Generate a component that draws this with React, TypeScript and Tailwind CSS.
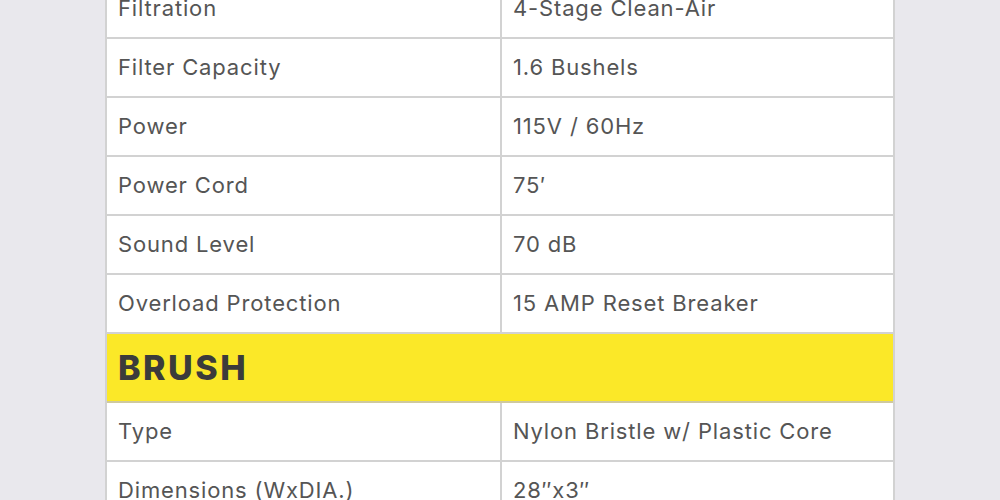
const rowsTop = [
  ['Filtration', '4-Stage Clean-Air'],
  ['Filter Capacity', '1.6 Bushels'],
  ['Power', '115V / 60Hz'],
  ['Power Cord', '75\u2032'],
  ['Sound Level', '70 dB'],
  ['Overload Protection', '15 AMP Reset Breaker'],
];

const rowsBrush = [
  ['Type', 'Nylon Bristle w/ Plastic Core'],
  ['Dimensions (WxDIA.)', '28\u2033x3\u2033'],
  ['Speed', '1,200 RPM'],
];

function SpecRow({ label, value }: { label: string; value: string }) {
  return (
    <div className="grid grid-cols-[395px_1fr] border-b-2 border-[#d2d2d2] h-[59px]">
      <div className="flex items-center pl-[11px] pr-3 border-r-2 border-[#d2d2d2]">{label}</div>
      <div className="flex items-center px-[11px]">{value}</div>
    </div>
  );
}

export default function App() {
  return (
    <div className="min-h-screen h-[500px] overflow-hidden bg-[#e9e8ed]">
      <div
        className="ml-[105px] w-[790px] -mt-[22px] bg-white border-x-2 border-t-2 border-[#d2d2d2] text-[22px] tracking-[0.85px] text-[#555555]"
        style={{ fontFamily: 'Inter, "Noto Sans", sans-serif' }}
      >
        {rowsTop.map(([l, v]) => (
          <SpecRow key={l} label={l} value={v} />
        ))}
        <div className="h-[69px] flex items-center pl-[11px] bg-[#fbe828] border-b-2 border-[#cfc99e]">
          <h2 className="text-[34px] font-extrabold tracking-[2.5px] text-[#3b3b3b]">BRUSH</h2>
        </div>
        {rowsBrush.map(([l, v]) => (
          <SpecRow key={l} label={l} value={v} />
        ))}
      </div>
    </div>
  );
}
